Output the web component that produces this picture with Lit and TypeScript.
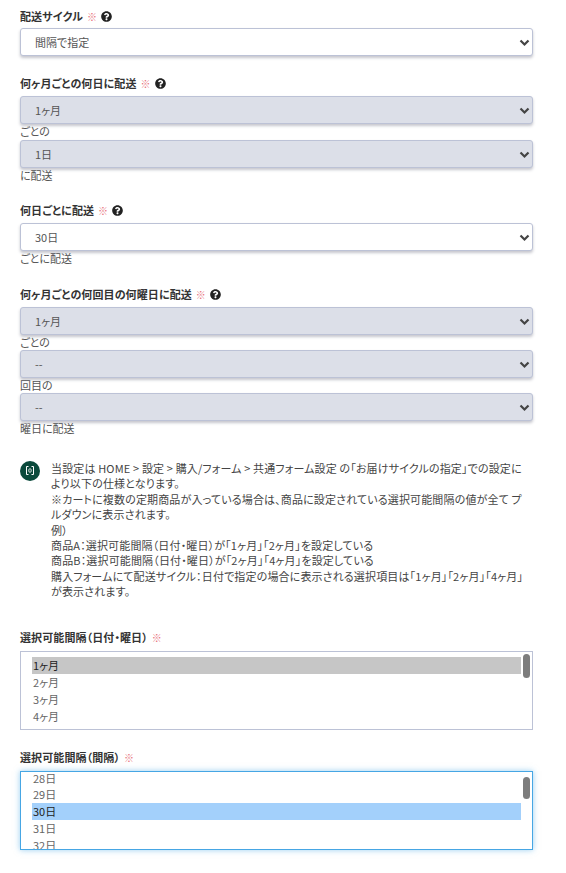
import { LitElement, html, css, svg } from "lit";
import { customElement } from "lit/decorators.js";

const help = html`<svg class="help" viewBox="0 0 512 512"><path fill="#222" d="M504 256c0 137-111 248-248 248S8 393 8 256 119 8 256 8s248 111 248 248zM262.700 90c-54.500 0-89.300 23-116.600 63.800-3.500 5.300-2.400 12.400 2.700 16.300l34.700 26.300c5.200 3.900 12.600 3 16.700-2.100 17.900-22.700 30.100-35.800 57.300-35.800 20.400 0 45.700 13.100 45.700 32.900 0 15-12.400 22.700-32.500 34-23.500 13.200-54.600 29.600-54.600 70.600V300c0 6.600 5.400 12 12 12h56c6.600 0 12-5.400 12-12v-1.300c0-28.400 83-29.600 83-106.500 0-57.900-60.100-102.200-116.400-102.200zM256 338c-25.400 0-46 20.600-46 46s20.600 46 46 46 46-20.600 46-46-20.600-46-46-46z"/></svg>`;

const chevron = svg`<path d="M1.500 1.500 L5.500 5.500 L9.500 1.500" fill="none" stroke="#444" stroke-width="2.200"/>`;

@customElement("app-root")
export class AppRoot extends LitElement {
  static styles = css`
    :host { display: block; font-family: "Noto Sans CJK JP", "Noto Sans", sans-serif; font-size: 11px; color: #333; font-feature-settings: "palt"; }
    .page { padding: 9px 33px 0 20px; display: flex; flex-direction: column; }
    .group { margin-bottom: 20.300px; }
    .group:first-child .label { margin-bottom: 4px; }
    .group.last-list { margin-bottom: 20px; }
    .label { display: flex; align-items: center; gap: 4px; height: 15px; margin-bottom: 5px; font-weight: 700; font-size: 11px; letter-spacing: .1px; color: #333; line-height: 15px; }
    .req { color: #e8707a; font-weight: 400; font-size: 10px; }
    .help { width: 11px; height: 11px; }
    .select { position: relative; box-sizing: border-box; height: 28px; border: 1px solid #bcc2d6; border-radius: 3px; background: #fff; box-shadow: 0 2px 3px rgba(50,55,80,.28); display: flex; align-items: center; padding-left: 14px; color: #555; }
    .select.off { background: #dcdfe8; }
    .select svg { position: absolute; right: 2px; top: 10px; width: 11px; height: 8px; }
    .sub { height: 15.300px; line-height: 15.300px; color: #555; }
    .note { display: flex; gap: 11px; margin-top: 4px; margin-bottom: 30.400px; padding-right: 6px; }
    .badge { flex: none; width: 20px; height: 20px; border-radius: 50%; background: #0b4a3c; display: flex; align-items: center; justify-content: center; }
    .badge svg { width: 10px; height: 11px; }
    .note p { margin: 0; font-size: 11px; letter-spacing: .15px; line-height: 15.400px; color: #444; }
    .list { position: relative; box-sizing: border-box; height: 79px; margin-top: 6px; border: 1px solid #bcc2d6; padding: 5px 11px 0 11px; color: #666; }
    .list.focus { border-color: #46a6e4; box-shadow: 0 0 6px rgba(70,166,228,.55); padding-top: 0; }
    .clip { height: 72px; overflow: hidden; }
    .focus .clip { height: 77px; }
    .opt { height: 17px; line-height: 17px; padding-left: 1px; width: 489px; box-sizing: border-box; }
    .opt.sel { background: #c6c6c6; color: #222; }
    .opt.cur { background: #a3d0fb; color: #222; }
    .focus .opt:first-child { height: 14px; line-height: 13px; }
    .thumb { position: absolute; right: 2px; top: 2px; width: 7px; height: 24px; border-radius: 3.500px; background: #7d7d7d; }
    .focus .thumb { top: 5px; height: 22px; }
  `;

  private sel(text: string, off = false) {
    return html`<div class="select ${off ? "off" : ""}"><span>${text}</span><svg viewBox="0 0 11 8">${chevron}</svg></div>`;
  }

  private label(text: string, withHelp = true) {
    return html`<div class="label"><span>${text}</span><span class="req">※</span>${withHelp ? help : ""}</div>`;
  }

  render() {
    return html`<div class="page">
      <div class="group">${this.label("配送サイクル")}${this.sel("間隔で指定")}</div>
      <div class="group">
        ${this.label("何ヶ月ごとの何日に配送")}
        ${this.sel("1ヶ月", true)}<div class="sub">ごとの</div>
        ${this.sel("1日", true)}<div class="sub">に配送</div>
      </div>
      <div class="group">
        ${this.label("何日ごとに配送")}
        ${this.sel("30日")}<div class="sub">ごとに配送</div>
      </div>
      <div class="group">
        ${this.label("何ヶ月ごとの何回目の何曜日に配送")}
        ${this.sel("1ヶ月", true)}<div class="sub">ごとの</div>
        ${this.sel("--", true)}<div class="sub">回目の</div>
        ${this.sel("--", true)}<div class="sub">曜日に配送</div>
      </div>
      <div class="note">
        <div class="badge"><svg viewBox="0 0 10 11"><path d="M3.500 1.500H1.500V9.500H3.500M6.500 1.500H8.500V9.500H6.500" fill="none" stroke="#fff" stroke-width="1"/><rect x="3.800" y="3.800" width="2.400" height="3.400" rx="1" fill="none" stroke="#fff" stroke-width=".8"/></svg></div>
        <p>当設定は HOME &gt; 設定 &gt; 購入/フォーム &gt; 共通フォーム設定 の「お届けサイクルの指定」での設定により以下の仕様となります。<br>※カートに複数の定期商品が入っている場合は、商品に設定されている選択可能間隔の値が全て プルダウンに表示されます。<br>例）<br>商品A：選択可能間隔（日付・曜日）が「1ヶ月」「2ヶ月」を設定している<br>商品B：選択可能間隔（日付・曜日）が「2ヶ月」「4ヶ月」を設定している<br>購入フォームにて配送サイクル：日付で指定の場合に表示される選択項目は「1ヶ月」「2ヶ月」「4ヶ月」が表示されます。</p>
      </div>
      <div class="group last-list">
        ${this.label("選択可能間隔（日付・曜日）", false)}
        <div class="list">
          <div class="clip"><div class="opt sel">1ヶ月</div><div class="opt">2ヶ月</div><div class="opt">3ヶ月</div><div class="opt">4ヶ月</div></div>
          <div class="thumb"></div>
        </div>
      </div>
      <div class="group">
        ${this.label("選択可能間隔（間隔）", false)}
        <div class="list focus">
          <div class="clip"><div class="opt">28日</div><div class="opt">29日</div><div class="opt cur">30日</div><div class="opt">31日</div><div class="opt">32日</div></div>
          <div class="thumb"></div>
        </div>
      </div>
    </div>`;
  }
}
